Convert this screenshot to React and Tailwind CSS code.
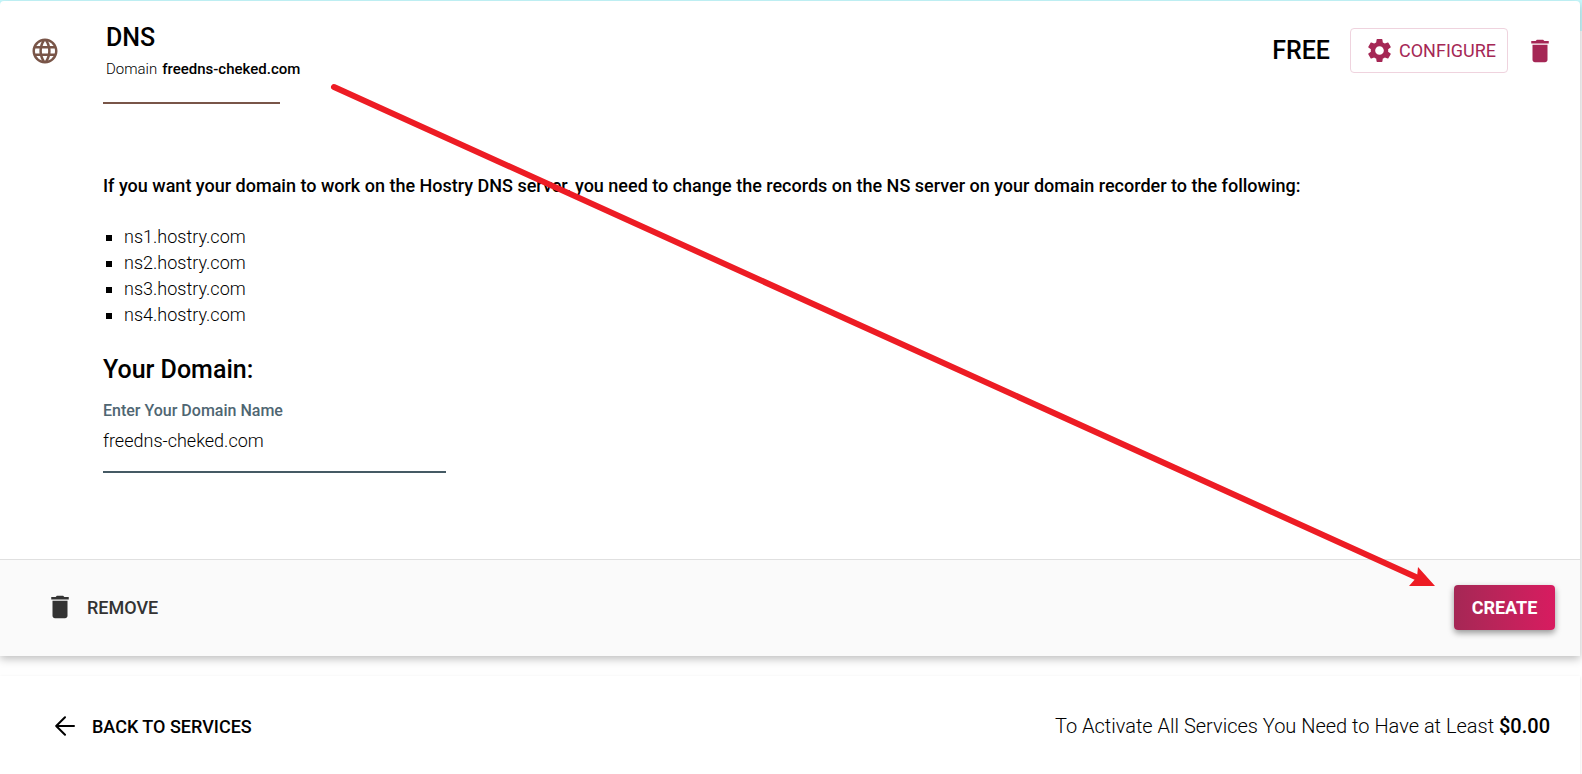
import { useState } from 'react';
import { MdDelete, MdLanguage, MdSettings } from 'react-icons/md';

const nameServers = ['ns1.hostry.com', 'ns2.hostry.com', 'ns3.hostry.com', 'ns4.hostry.com'];

const BackArrow = () => (
  <svg width="20" height="20" viewBox="0 0 20 20" fill="none" stroke="currentColor" strokeWidth="2" strokeLinecap="round" strokeLinejoin="round" aria-hidden="true">
    <path d="M19 10H1.5M10 1.2L1.2 10l8.8 8.8" />
  </svg>
);

// Pointer from the domain summary to the create button
const GuideArrow = () => (
  <svg className="absolute left-0 top-0 pointer-events-none" width="1440" height="600" viewBox="0 0 1440 600" aria-hidden="true">
    <path d="M334 87L1418 578" stroke="#ed1c24" strokeWidth="6" strokeLinecap="round" />
    <path d="M1435 586L1418 567L1417 577L1409 586Z" fill="#ed1c24" />
  </svg>
);

const ServiceHeader = ({ domain }) => (
  <header className="flex items-start justify-between pl-[30px] pr-[25px] pt-5">
    <div className="flex">
      <MdLanguage size={30} className="mt-[15px] text-[#795548]" />
      <div className="ml-[43px]">
        <div className="h-[81px] pl-[3px]">
          <h1 className="text-[25px] leading-[34px] font-medium">DNS</h1>
          <p className="flex gap-[5px] text-[15px] leading-7">
            <span className="font-light">Domain</span>
            <b className="font-medium">{domain}</b>
          </p>
        </div>
        <div className="w-[177px] h-[2px] bg-[#795548]" />
      </div>
    </div>

    <div className="flex items-center mt-[7px]">
      <span className="text-[25px] leading-8 font-medium">FREE</span>
      <button className="ml-5 h-[45px] w-[158px] flex items-center gap-[5px] pl-[14px] rounded border border-[#efd3de] text-[#a52755] text-[18px]">
        <MdSettings size={29} className="shrink-0" />
        CONFIGURE
      </button>
      <button className="ml-[17px]" aria-label="Delete service">
        <MdDelete size={30} className="text-[#a52755]" />
      </button>
    </div>
  </header>
);

export default function App() {
  const [domain, setDomain] = useState('freedns-cheked.com');

  return (
    <div className="relative min-h-screen overflow-hidden pt-px pr-[2px] font-['Roboto',sans-serif] text-black bg-[linear-gradient(#c8fbff_0px,#c8fbff_31px,#fefefe_31px)]">
      <section className="rounded-t-[4px] bg-white shadow-[0_3px_8px_rgba(0,0,0,0.25)]">
        <ServiceHeader domain={domain} />

        <div className="px-[103px] pt-[66px] pb-[86px]">
          <p className="text-[18px] leading-8 font-medium">
            If you want your domain to work on the Hostry DNS server, you need to change the records on the NS server on your domain recorder to the following:
          </p>
          <ul className="mt-[22px] text-[18px] leading-[26px] font-light">
            {nameServers.map((ns) => (
              <li key={ns} className="flex items-center gap-[12px] pl-[3px]">
                <span className="w-[6px] h-[6px] mt-[2px] bg-black" />
                {ns}
              </li>
            ))}
          </ul>

          <h2 className="mt-[26px] text-[25px] leading-8 font-medium">Your Domain:</h2>
          <label htmlFor="domain" className="block mt-[13px] text-[16px] leading-6 font-medium text-[#4f6672]">
            Enter Your Domain Name
          </label>
          <input
            id="domain"
            value={domain}
            onChange={(e) => setDomain(e.target.value)}
            className="block w-[343px] h-[50px] pb-[14px] text-[18px] font-light border-b-2 border-[#455a64] outline-none"
          />
        </div>

        <footer className="flex items-center justify-between h-[97px] pl-[45px] pr-[25px] pb-[2px] border-t border-[#e0e0e0] bg-[#fafafa]">
          <button className="flex items-center gap-[12px] text-[18px] font-medium text-[#333333]">
            <MdDelete size={30} />
            REMOVE
          </button>
          <button className="h-[45px] w-[101px] rounded text-[18px] font-bold text-white bg-linear-to-r from-[#a52755] to-[#d81b60] shadow-[0_3px_6px_rgba(0,0,0,0.4)]">
            CREATE
          </button>
        </footer>
      </section>

      <section className="flex items-center justify-between mt-5 h-[100px] pl-[55px] pr-[30px] bg-white shadow-[0_1px_3px_rgba(0,0,0,0.1)]">
        <a href="#services" className="flex items-center gap-[17px] text-[18px] font-medium">
          <BackArrow />
          BACK TO SERVICES
        </a>
        <p className="text-[20px] font-light">
          To Activate All Services You Need to Have at Least <b className="font-medium">$0.00</b>
        </p>
      </section>

      <GuideArrow />
    </div>
  );
}
